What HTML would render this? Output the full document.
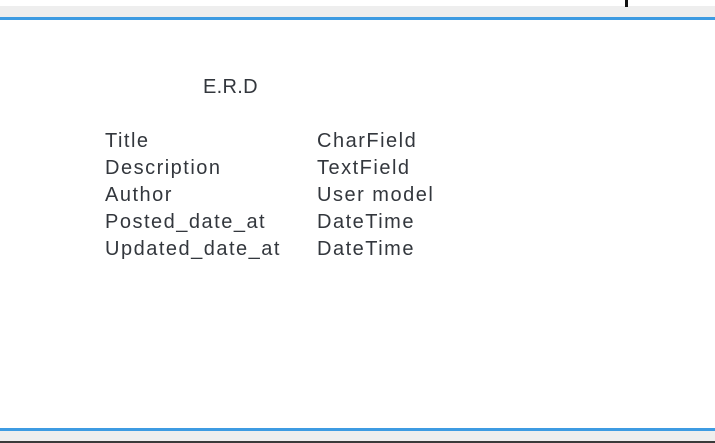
<!DOCTYPE html>
<html><head><style>
body{margin:0;width:715px;height:443px;background:#fff;position:relative;overflow:hidden;font-family:"Liberation Sans",sans-serif;color:#33373d}
.b{position:absolute;left:0;width:715px}
.t{position:absolute;font-size:20px;line-height:27px;white-space:pre;letter-spacing:1.5px}
</style></head><body>
<div class="b" style="top:6px;height:11px;background:#eeeeee"></div>
<div class="b" style="top:17px;height:3px;background:#3d9be2"></div>
<div style="position:absolute;left:625px;top:0;width:3px;height:7px;background:#111"></div>
<div class="b" style="top:428px;height:3px;background:#3d9be2"></div>
<div class="b" style="top:431px;height:10px;background:#eeeeee"></div>
<div class="b" style="top:441px;height:2px;background:#3a3a3a"></div>
<div class="t" style="left:203px;top:74px;letter-spacing:0.3px">E.R.D</div>
<div class="t" style="left:105px;top:128px">Title
Description
Author
Posted_date_at
Updated_date_at</div>
<div class="t" style="left:317px;top:128px">CharField
TextField
User model
DateTime
DateTime</div>
</body></html>
